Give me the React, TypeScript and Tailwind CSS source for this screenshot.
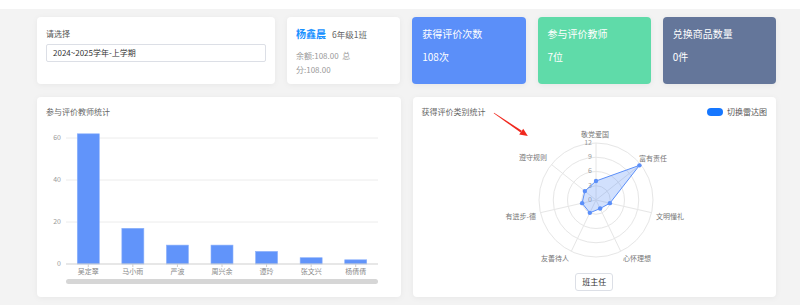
import React from 'react';

// Teacher evaluation bar data
const BARS: [string, number][] = [
  ['吴定翠', 62],
  ['马小雨', 17],
  ['严波', 9],
  ['周兴余', 9],
  ['谭玲', 6],
  ['张文兴', 3],
  ['杨倩倩', 2],
];

// Radar categories, clockwise from the top
const RADAR: { name: string; value: number; x: number; y: number; anchor: 'start' | 'middle' | 'end' }[] = [
  { name: '敬党爱国', value: 4, x: 594, y: 135, anchor: 'middle' },
  { name: '富有责任', value: 11.7, x: 638, y: 159, anchor: 'start' },
  { name: '文明懂礼', value: 3, x: 655, y: 217, anchor: 'start' },
  { name: '心怀理想', value: 2, x: 622, y: 259, anchor: 'start' },
  { name: '友善待人', value: 3, x: 568, y: 259, anchor: 'end' },
  { name: '有进步-德', value: 3, x: 535, y: 217, anchor: 'end' },
  { name: '遵守规则', value: 3, x: 546, y: 158, anchor: 'end' },
];

const STATS = [
  { title: '获得评价次数', value: '108次', bg: 'bg-[#5b8ff9]' },
  { title: '参与评价教师', value: '7位', bg: 'bg-[#5fdba9]' },
  { title: '兑换商品数量', value: '0件', bg: 'bg-[#64769a]' },
];

function BarChart() {
  const x0 = 66;
  const x1 = 378;
  const y0 = 264;
  const k = 2.1;
  const band = (x1 - x0) / BARS.length;

  return (
    <svg viewBox="37 121 363 176" width={363} height={176} className="block">
      {[20, 40, 60].map((v) => (
        <line key={v} x1={x0} x2={x1} y1={y0 - v * k} y2={y0 - v * k} stroke="#ececec" strokeWidth={1} />
      ))}
      {[0, 20, 40, 60].map((v) => (
        <text key={v} x={61} y={y0 - v * k} fontSize={7} fill="#999" textAnchor="end" dominantBaseline="middle">
          {v}
        </text>
      ))}
      {BARS.map(([name, v], i) => {
        const cx = x0 + (i + 0.5) * band;
        return (
          <g key={name}>
            <rect x={cx - 11} y={y0 - v * k} width={22} height={v * k} fill="#6194fa" stroke="#8db1fb" strokeWidth={0.6} />
            <line x1={cx} x2={cx} y1={y0} y2={y0 + 3} stroke="#ccc" strokeWidth={1} />
            <text x={cx} y={272.5} fontSize={7} fill="#888" textAnchor="middle" dominantBaseline="middle">
              {name}
            </text>
          </g>
        );
      })}
      <line x1={x0} x2={x1} y1={y0} y2={y0} stroke="#cfcfcf" strokeWidth={1} />
      <rect x={x0} y={279} width={x1 - x0} height={5} rx={2.5} fill="#d6d6d6" />
    </svg>
  );
}

function RadarChart() {
  const cx = 595;
  const cy = 200;
  const R = 57;
  const n = RADAR.length;
  const pt = (i: number, r: number) => {
    const a = (-90 + (i * 360) / n) * (Math.PI / 180);
    return [cx + r * Math.cos(a), cy + r * Math.sin(a)];
  };
  const poly = RADAR.map((d, i) => pt(i, (d.value / 12) * R));

  return (
    <svg viewBox="412 121 364 149" width={364} height={149} className="block">
      {[1, 2, 3, 4].map((s) => (
        <circle key={s} cx={cx} cy={cy} r={(R * s) / 4} fill="none" stroke="#e6e6e6" strokeWidth={1} />
      ))}
      {RADAR.map((d, i) => {
        const [x, y] = pt(i, R);
        return <line key={d.name} x1={cx} y1={cy} x2={x} y2={y} stroke="#e6e6e6" strokeWidth={1} />;
      })}
      {[0, 3, 6, 9, 12].map((v) => (
        <text key={v} x={591} y={cy - (v / 12) * R} fontSize={7} fill="#999" textAnchor="end" dominantBaseline="middle">
          {v}
        </text>
      ))}
      {RADAR.map((d) => (
        <text key={d.name} x={d.x} y={d.y} fontSize={7} fill="#777" textAnchor={d.anchor} dominantBaseline="middle">
          {d.name}
        </text>
      ))}
      <polygon
        points={poly.map((p) => p.join(',')).join(' ')}
        fill="rgba(91,143,249,0.28)"
        stroke="#5b8ff9"
        strokeWidth={1}
        strokeLinejoin="round"
      />
      {poly.map(([x, y], i) => (
        <circle key={i} cx={x} cy={y} r={2.2} fill="#5b8ff9" />
      ))}
    </svg>
  );
}

function Arrow() {
  // red annotation arrow pointing at the radar
  const tail = [493, 113];
  const tip = [527, 136];
  const dx = tip[0] - tail[0];
  const dy = tip[1] - tail[1];
  const len = Math.hypot(dx, dy);
  const ux = dx / len;
  const uy = dy / len;
  const px = -uy;
  const py = ux;
  const bx = tip[0] - ux * 8;
  const by = tip[1] - uy * 8;
  const shaft = [
    [tail[0] + px * 0.3, tail[1] + py * 0.3],
    [bx + px * 1.1, by + py * 1.1],
    [bx - px * 1.1, by - py * 1.1],
    [tail[0] - px * 0.3, tail[1] - py * 0.3],
  ];
  const head = [
    [bx + px * 3.6, by + py * 3.6],
    tip,
    [bx - px * 3.6, by - py * 3.6],
  ];
  return (
    <svg viewBox="412 97 364 200" className="absolute inset-0 w-full h-full pointer-events-none">
      <polygon points={shaft.map((p) => p.join(',')).join(' ')} fill="#f0281e" />
      <polygon points={head.map((p) => p.join(',')).join(' ')} fill="#f0281e" />
    </svg>
  );
}

export default function App() {
  return (
    <div className="w-[800px] h-[305px] overflow-hidden bg-[#f3f3f3] font-['Noto_Sans_CJK_SC','Noto_Sans',sans-serif]">
      <div className="h-[9px] bg-white" />

      <div className="pl-[37px] pr-[24px] pt-[8px]">
        {/* Top row */}
        <div className="grid grid-cols-[238px_repeat(4,1fr)] gap-3 h-[67px]">
          <div className="bg-white rounded-[4px] shadow-[0_1px_6px_rgba(0,0,0,0.05)] px-[9px] pt-[11px]">
            <div className="text-[8px] leading-[11px] text-[#555]">请选择</div>
            <div className="mt-[5px] h-[18px] border border-[#dcdfe6] rounded-[2px] px-[6px] flex items-center text-[8px] text-[#333]">
              2024~2025学年-上学期
            </div>
          </div>

          <div className="bg-white rounded-[4px] shadow-[0_1px_6px_rgba(0,0,0,0.05)] px-[9px] pt-[10px]">
            <div className="flex items-baseline gap-[6px] leading-[14px]">
              <span className="text-[10px] font-bold text-[#1890ff]">杨鑫晨</span>
              <span className="text-[8.5px] text-[#666]">6年级1班</span>
            </div>
            <div className="mt-[8px] text-[8px] leading-[13.5px] text-[#999]">
              余额:108.00&nbsp;&nbsp;总
              <br />
              分:108.00
            </div>
          </div>

          {STATS.map((s) => (
            <div key={s.title} className={`${s.bg} rounded-[4px] shadow-[0_1px_6px_rgba(0,0,0,0.06)] px-[10px] pt-[10px] text-white`}>
              <div className="text-[10px] leading-[14px]">{s.title}</div>
              <div className="mt-[9px] text-[10px] leading-[14px]">{s.value}</div>
            </div>
          ))}
        </div>

        {/* Bottom row */}
        <div className="grid grid-cols-2 gap-3 mt-[13px] h-[200px]">
          <div className="bg-white rounded-[4px] shadow-[0_1px_6px_rgba(0,0,0,0.05)] flex flex-col">
            <div className="h-[24px] px-[9px] pt-[9px] text-[8px] leading-[11px] text-[#666]">参与评价教师统计</div>
            <BarChart />
          </div>

          <div className="relative bg-white rounded-[4px] shadow-[0_1px_6px_rgba(0,0,0,0.05)] flex flex-col">
            <div className="h-[24px] pl-[9px] pr-[9px] pt-[9px] flex items-start justify-between">
              <span className="text-[8px] leading-[11px] text-[#666]">获得评价类别统计</span>
              <div className="flex items-center gap-[4px] mt-[1px]">
                <span className="w-[16px] h-[8px] rounded-full bg-[#1677ff]" />
                <span className="text-[8px] leading-[10px] text-[#555]">切换雷达图</span>
              </div>
            </div>
            <RadarChart />
            <div className="flex justify-center mt-[3px]">
              <button className="h-[18px] px-[6px] border border-[#dcdfe6] rounded-[3px] bg-white text-[8px] text-[#333] leading-none">
                班主任
              </button>
            </div>
            <Arrow />
          </div>
        </div>
      </div>
    </div>
  );
}
